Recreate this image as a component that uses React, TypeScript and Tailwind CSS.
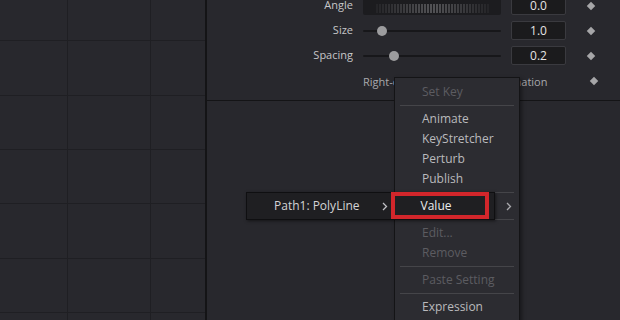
import React from "react";

const rowHeights = ["h-[41px]", "h-[55px]", "h-[54px]", "h-[54px]", "h-[55px]", "h-[54px]", "h-[20px]"];

function Diamond() {
  return <div className="h-[6px] w-[6px] rotate-45 bg-[#a6a6a8]" />;
}

function Chevron({ color = "#a8a8ac" }: { color?: string }) {
  return (
    <svg width="6" height="9" viewBox="0 0 6 9" fill="none">
      <path d="M1 1l3.5 3.5L1 8" stroke={color} strokeWidth="1.3" />
    </svg>
  );
}

function NumBox({ value }: { value: string }) {
  return (
    <div className="ml-[10px] flex h-[19px] w-[55px] items-center justify-center rounded-[2px] border border-[#3a3a3f] bg-[#1b1b1d] text-[12px] text-[#e4e4e4]">
      {value}
    </div>
  );
}

function Slider({ pos }: { pos: number }) {
  return (
    <div className="relative ml-[10px] flex h-[19px] w-[138px] items-center">
      <div className="h-[2px] w-full rounded bg-[#17171a]" />
      <div
        className="absolute top-1/2 h-[10px] w-[10px] -translate-y-1/2 rounded-full bg-[#9c9c9e]"
        style={{ left: pos }}
      />
    </div>
  );
}

function Wheel() {
  const ticks = Array.from({ length: 38 }, (_, i) => i);
  return (
    <div className="ml-[10px] h-[19px] w-[138px] rounded-[2px] bg-[#1c1c1f]">
      <svg width="138" height="19">
        {ticks.map((i) => {
          const x = 14 + i * 3;
          const d = Math.abs(i - 18.5) / 19;
          return (
            <line
              key={i}
              x1={x}
              x2={x}
              y1={8}
              y2={17}
              stroke="#8a8a8e"
              strokeWidth="1"
              opacity={1 - d * 0.85}
            />
          );
        })}
      </svg>
    </div>
  );
}

function Row({ label, children }: { label: string; children?: React.ReactNode }) {
  return (
    <div className="flex h-[25px] items-center">
      <div className="w-[146px] text-right text-[11px] text-[#c6c6c8]">{label}</div>
      {children}
    </div>
  );
}

function Item({ label, disabled }: { label: string; disabled?: boolean }) {
  return (
    <div
      className={
        disabled
          ? "flex h-[20px] items-center pl-[27px] text-[12px] text-[#5c5c61]"
          : "flex h-[20px] items-center pl-[27px] text-[12px] text-[#bababd]"
      }
    >
      {label}
    </div>
  );
}

function Sep() {
  return (
    <div className="flex h-[7px] items-center px-[5px]">
      <div className="h-px w-full bg-[#454549]" />
    </div>
  );
}

export default function App() {
  return (
    <div
      className="relative flex h-[320px] w-[620px] overflow-hidden bg-[#28282d]"
      style={{ fontFamily: '"Open Sans", "DejaVu Sans", sans-serif' }}
    >
      {/* left grid */}
      <div className="flex w-[205px] flex-col">
        {rowHeights.map((h, r) => (
          <div key={r} className={"flex shrink-0 " + h}>
            <div className="w-[68px] border-r border-b border-[#1f1f23]" />
            <div className="w-[83px] border-r border-b border-[#1f1f23]" />
            <div className="flex-1 border-b border-[#1f1f23]" />
          </div>
        ))}
      </div>
      <div className="w-[2px] bg-[#141416]" />

      {/* right panel */}
      <div className="flex flex-1 flex-col">
        <div className="h-[101px] overflow-hidden border-b border-[#141416]">
          <div className="-mt-[7px]">
            <Row label="Angle">
              <Wheel />
              <NumBox value="0.0" />
              <div className="ml-[22px]">
                <Diamond />
              </div>
            </Row>
            <Row label="Size">
              <Slider pos={14} />
              <NumBox value="1.0" />
              <div className="ml-[22px]">
                <Diamond />
              </div>
            </Row>
            <Row label="Spacing">
              <Slider pos={26} />
              <NumBox value="0.2" />
              <div className="ml-[22px]">
                <Diamond />
              </div>
            </Row>
            <div className="flex h-[25px] items-center">
              <div className="ml-[156px] w-[210px] whitespace-nowrap pt-[3px] text-[11px] text-[#a8a8ac]">
                Right-click here for shape animation
              </div>
              <div className="ml-[18px]">
                <Diamond />
              </div>
            </div>
          </div>
        </div>
        <div className="flex-1" />
      </div>

      {/* context menu */}
      <div className="absolute left-[394px] top-[77px] h-[260px] w-[126px] border border-[#141416] bg-[#2c2c31] pt-[4px] shadow-[2px_2px_4px_rgba(0,0,0,0.4)]">
        <Item label="Set Key" disabled />
        <Sep />
        <Item label="Animate" />
        <Item label="KeyStretcher" />
        <Item label="Perturb" />
        <Item label="Publish" />
        <Sep />
        <div className="flex h-[20px] items-center justify-end pr-[7px]">
          <Chevron />
        </div>
        <Sep />
        <Item label="Edit..." disabled />
        <Item label="Remove" disabled />
        <Sep />
        <Item label="Paste Setting" disabled />
        <Sep />
        <Item label="Expression" />
      </div>

      {/* path bar */}
      <div className="absolute left-[246px] top-[192px] flex h-[28px] w-[249px] items-center border border-[#0f0f11] bg-[#1f1f22] shadow-[1px_1px_3px_rgba(0,0,0,0.5)]">
        <span className="pl-[27px] text-[12px] text-[#d4d4d6]">Path1: PolyLine</span>
        <span className="ml-[22px]">
          <Chevron color="#c0c0c4" />
        </span>
        <span className="ml-[33px] text-[12px] text-[#ececee]">Value</span>
      </div>

      {/* highlight box */}
      <div className="absolute left-[391px] top-[192px] h-[27px] w-[98px] border-4 border-[#d2262b]" />
    </div>
  );
}
